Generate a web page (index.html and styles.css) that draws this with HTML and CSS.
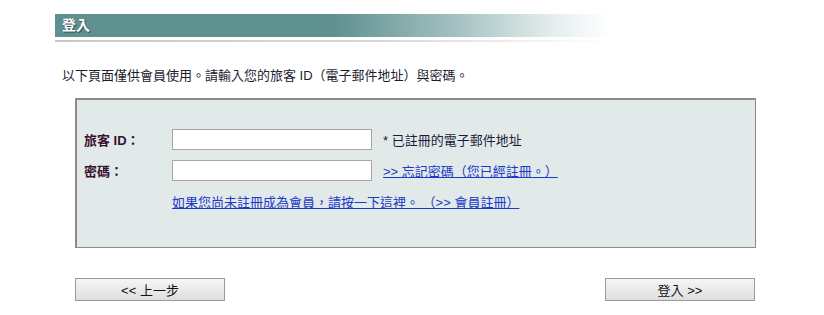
FILE: index.html
```html
<!DOCTYPE html>
<html lang="zh-Hant">
  <head>
    <meta charset="UTF-8" />
    <title>登入</title>
    <link rel="stylesheet" href="styles.css">
  </head>
  <body>
    <div class="page">
      <div class="title-bar"><h1>登入</h1></div>
      <div class="title-rule"></div>

      <p class="intro">以下頁面僅供會員使用。請輸入您的旅客 ID（電子郵件地址）與密碼。</p>

      <form class="login-box">
        <div class="row">
          <label for="uid">旅客 ID：</label>
          <input type="text" id="uid" />
          <span class="hint">* 已註冊的電子郵件地址</span>
        </div>
        <div class="row">
          <label for="pwd">密碼：</label>
          <input type="password" id="pwd" />
          <a href="#" class="link">&gt;&gt; 忘記密碼（您已經註冊。）</a>
        </div>
        <div class="row">
          <span></span>
          <a href="#" class="link wide">如果您尚未註冊成為會員，請按一下這裡。 （&gt;&gt; 會員註冊）</a>
        </div>
      </form>

      <div class="actions">
        <button type="button" class="btn">&lt;&lt; 上一步</button>
        <button type="button" class="btn">登入 &gt;&gt;</button>
      </div>
    </div>
  </body>
</html>
```

FILE: styles.css
```css
body {
  margin: 0;
  background: #fff;
  font-family: 'Liberation Sans', 'Noto Sans CJK TC', sans-serif;
  font-size: 13px;
  color: #222;
}

.page {
  width: 700px;
  padding: 14px 0 0 55px;
}

.title-bar {
  width: 555px;
  height: 23px;
  background: linear-gradient(to right, #5f9090 0%, #5f9090 50%, #a3c0c0 72%, #e6eeee 90%, #ffffff 100%);
}

.title-bar h1 {
  margin: 0;
  padding-left: 7px;
  font-size: 14px;
  line-height: 23px;
  font-weight: bold;
  color: #fff;
  text-shadow: 1px 1px 1px #2c4a4a;
}

.title-rule {
  width: 555px;
  height: 2px;
  margin-top: 3px;
  background: linear-gradient(to right, #c8c8c8 0%, #d8d8d8 60%, #ffffff 100%);
}

.intro {
  margin: 25px 0 0 7px;
  line-height: 18px;
  color: #1c1c2e;
}

.login-box {
  width: 664px;
  margin: 13px 0 0 20px;
  padding: 29px 7px 35px 7px;
  background: #e2eae9;
  border: 1px solid #8a8a8a;
  border-top-width: 2px;
  border-left-width: 2px;
  display: flex;
  flex-direction: column;
  gap: 10px;
}

.row {
  display: grid;
  grid-template-columns: 77px 200px auto;
  align-items: center;
  column-gap: 11px;
  height: 21px;
}

.row label {
  font-weight: bold;
  color: #3a1030;
}

.row input {
  box-sizing: border-box;
  width: 200px;
  height: 21px;
  margin: 0;
  border: 1px solid #a6a6a6;
  background: #fff;
}

.hint {
  color: #1c1c3a;
}

.link {
  color: #2038c8;
}

.link.wide {
  grid-column: 2 / 4;
}

.actions {
  width: 680px;
  margin: 30px 0 0 20px;
  display: flex;
  justify-content: space-between;
}

.btn {
  width: 150px;
  height: 23px;
  border: 1px solid #9a9a9a;
  background: linear-gradient(to bottom, #f6f6f6, #dedede);
  font-family: 'Liberation Sans', 'Noto Sans CJK TC', sans-serif;
  font-size: 13px;
  color: #111;
  padding: 0;
}
```
